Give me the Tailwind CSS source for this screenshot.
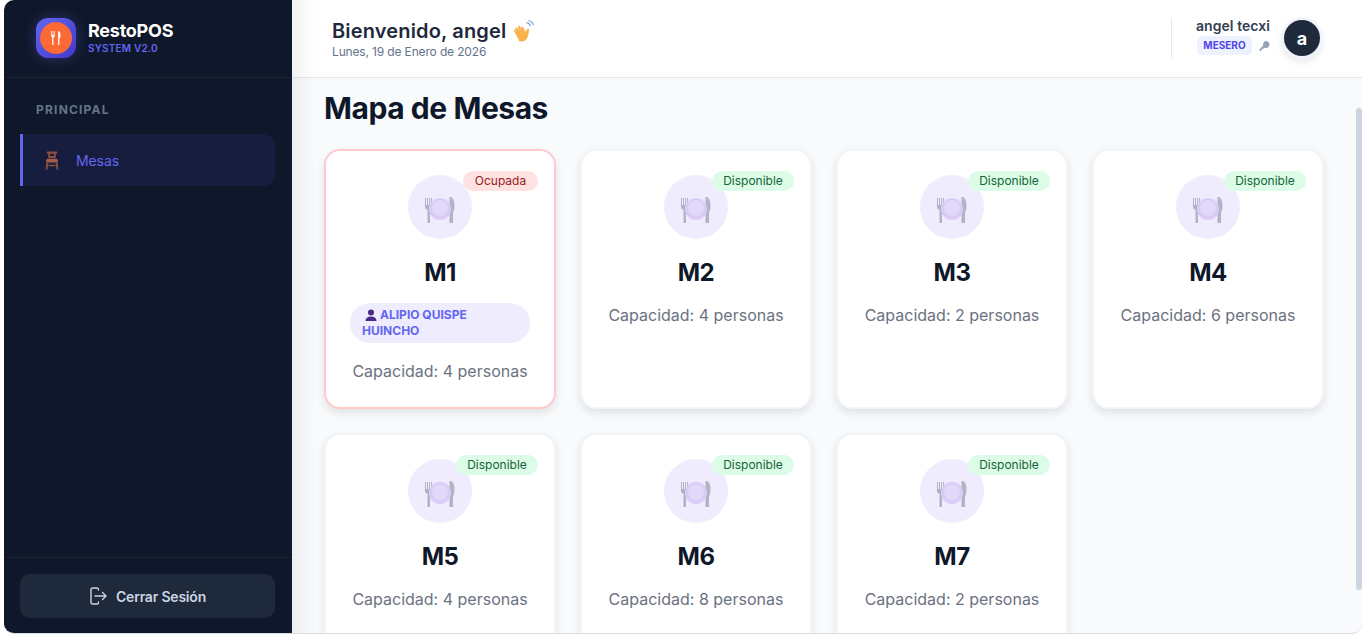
<!DOCTYPE html>
<html lang="es">
<head>
  <meta charset="UTF-8">
  <title>RestoPOS - Mapa de Mesas</title>
  <meta name="viewport" content="width=device-width, initial-scale=1">
  <script src="https://cdn.jsdelivr.net/npm/@tailwindcss/browser@4"></script>
</head>
<body class="bg-white h-[636px] overflow-hidden font-['Inter',sans-serif]">
  <div class="ml-[4px] w-[1358px] h-[634px] flex overflow-hidden rounded-[10px] border-b border-[#d9dce1] bg-[#f8fafc]">

    <!-- sidebar -->
    <aside class="w-[288px] shrink-0 bg-[#0f172a] flex flex-col z-10">
      <div class="h-[78px] border-b border-white/5 flex items-center pl-[32px] pb-[1px] gap-[12px]">
        <div class="w-[40px] h-[40px] rounded-[12px] bg-gradient-to-br from-[#6366f1] to-[#4338ca] shadow-[0_0_14px_rgba(99,102,241,0.35)] flex items-center justify-center">
          <div class="w-[32px] h-[32px] rounded-full bg-[#fb6a35] flex items-center justify-center">
            <svg width="16" height="16" viewBox="0 0 16 16" fill="#fff">
              <path d="M3.200 1h.7v4h.7V1h.7v4h.7V1h.7v5c0 .9-.6 1.400-1.200 1.600L5.400 15H4.200l-.1-7.400C3.500 7.400 3.200 6.900 3.200 6z"/>
              <path d="M10.600 1c1.300.8 2 2.600 2 4.600 0 1.300-.4 2.200-1.200 2.600V15h-1.300V1z"/>
            </svg>
          </div>
        </div>
        <div class="flex flex-col mb-[3px]">
          <span class="text-white text-[18px] leading-[22px] font-bold tracking-[-0.25px]">RestoPOS</span>
          <span class="text-[#6366f1] text-[10px] leading-[12px] font-semibold tracking-[0.2px]">SYSTEM V2.0</span>
        </div>
      </div>

      <div class="flex-1 px-[16px] pt-[24px]">
        <div class="pl-[16px] text-[#64748b] text-[12px] leading-[16px] font-bold tracking-[1.2px]">PRINCIPAL</div>
        <a class="mt-[16px] h-[52px] w-[255px] flex items-center gap-[14px] pl-[19px] bg-[#161d3f] border-l-[3px] border-[#6366f1] rounded-r-[12px] text-[#6366f1] text-[14px] font-normal">
          <svg width="20" height="20" viewBox="0 0 20 20">
            <path fill="#8a4f3f" d="M5 1.500h10v2.200h-1.200V8H6.200V3.700H5zM8 3.700V6h4V3.700z"/>
            <path fill="#a35c48" d="M4.800 8.800h10.400l1 3.600H3.800z"/>
            <path fill="#8a4f3f" d="M4.300 12.800h2.100L5.500 19.500H3.700zM13.600 12.800h2.100l.6 6.700h-1.800zM6.500 14.800h7v1.500h-7z"/>
          </svg>
          <span class="tracking-[-0.1px]">Mesas</span>
        </a>
      </div>

      <div class="h-[76px] border-t border-white/5 px-[16px] pt-[16px]">
        <button class="w-[255px] h-[44px] rounded-[10px] bg-[#1e293b] text-[#cbd5e1] text-[14px] font-semibold tracking-[-0.2px] flex items-center justify-center gap-[9px]">
          <svg width="18" height="18" viewBox="0 0 18 18" fill="none" stroke="#cbd5e1" stroke-width="1.400" stroke-linecap="round" stroke-linejoin="round">
            <path d="M9.500 3V2.600A1.600 1.600 0 0 0 7.900 1H3.600A1.600 1.600 0 0 0 2 2.600v12.800A1.600 1.600 0 0 0 3.600 17h4.300a1.600 1.600 0 0 0 1.600-1.600V15"/>
            <path d="M6 9h11M13.500 5.500 17 9l-3.500 3.500"/>
          </svg>
          Cerrar Sesión
        </button>
      </div>
    </aside>

    <!-- main -->
    <main class="relative flex-1 flex flex-col min-w-0">
      <header class="h-[78px] shrink-0 bg-white border-b border-[#e2e8f0] flex items-center justify-between pl-[40px] pr-[42px]">
        <div>
          <div class="flex items-center gap-[7px] text-[#1e293b] text-[20px] leading-[26px] font-semibold tracking-[0.15px]">
            Bienvenido, angel
            <svg width="22" height="22" viewBox="0 0 22 22" class="shrink-0">
              <path fill="#f9b24a" d="M3.700 16 1 11c-.6-1.100 1-2 1.700-.9l1.300 2L2.600 8.800c-.5-1.200 1.200-2 1.900-.8l2 3.200-1.400-4c-.4-1.300 1.400-1.900 2-.7l1.900 4-.8-2.800c-.3-1.200 1.400-1.800 1.900-.6l2.400 5.100c.5-1.600.9-3.100 2.400-3.400.9-.1 1.300.5 1.200 1.200-.4 2.100-.6 4.600-1.300 6.700-1.200 3.900-5.300 5.800-8.800 4.300C5.800 19.200 4.600 17.800 3.700 16z"/>
              <path fill="none" stroke="#5b9be0" stroke-width="1.100" stroke-linecap="round" d="M13.800 2.800c1.600.1 2.900 1.200 3.300 2.800M15.800 .8c2.200.2 3.800 1.700 4.400 3.800"/>
            </svg>
          </div>
          <div class="text-[#64748b] text-[12px] leading-[16px] tracking-[-0.15px]">Lunes, 19 de Enero de 2026</div>
        </div>
        <div class="flex items-center h-[40px] -mt-[1px] border-l border-[#e2e8f0]">
          <div class="pl-[24px] pb-[4px] flex flex-col items-end">
            <span class="text-[#334155] text-[14px] leading-[18px] font-semibold tracking-[0.05px]">angel tecxi</span>
            <div class="mt-[1px] flex items-center gap-[7px]">
              <span class="h-[19px] w-[55px] flex items-center justify-center rounded-[5px] bg-[#eef2ff] text-[#4f46e5] text-[10px] font-bold">MESERO</span>
              <svg width="11" height="12" viewBox="0 0 12 12" fill="#94a3b8"><path d="M7.600.6a3.800 3.800 0 1 1-1.700 7.200L4.700 9H3.500v1.200H2.300v1.200H.6V9.500l4-4A3.800 3.800 0 0 1 7.600.6z"/></svg>
            </div>
          </div>
          <div class="ml-[14px] w-[36px] h-[36px] rounded-full bg-[#1e293b] ring-[3px] ring-[#f1f5f9] shadow-[0_4px_10px_rgba(15,23,42,0.15)] flex items-center justify-center text-white text-[18px] font-bold">a</div>
        </div>
      </header>

      <!-- sombra que cae del sidebar -->
      <div class="absolute left-0 top-0 bottom-0 w-[24px] bg-gradient-to-r from-black/5 to-transparent pointer-events-none"></div>

      <section class="flex-1 overflow-hidden pl-[32px] pt-[12px]">
        <h1 class="text-[#0f172a] text-[30px] leading-[36px] font-bold tracking-[-0.45px]">Mapa de Mesas</h1>
        <div id="mesas" class="mt-[23px] grid grid-cols-[repeat(4,232px)] gap-[24px]"></div>
      </section>

      <!-- barra de scroll -->
      <div class="absolute right-0 top-[108px] w-[6px] h-[482px] rounded-full bg-[#cbd5e1]"></div>
    </main>
  </div>

  <script>
    const mesas = [
      { nombre: "M1", capacidad: 4, cliente: "ALIPIO QUISPE HUINCHO" },
      { nombre: "M2", capacidad: 4 },
      { nombre: "M3", capacidad: 2 },
      { nombre: "M4", capacidad: 6 },
      { nombre: "M5", capacidad: 4 },
      { nombre: "M6", capacidad: 8 },
      { nombre: "M7", capacidad: 2 },
    ];

    const plato = `
      <svg width="32" height="32" viewBox="0 0 32 32" class="opacity-50">
        <g fill="#7d7790" transform="translate(0 5)">
          <path d="M1 2h1v7h1V2h1v7h1V2h1v7h1V2h1v9c0 1.500-.8 2.300-2 2.700V27H3.500V13.700C1.800 13.300 1 12.500 1 11z"/>
          <path d="M25.500 27V1.500c0-.8 1-1 1.500-.6C29.800 2.500 30.500 6 30.500 10c0 3-1 5.500-1.500 6.500V27z"/>
        </g>
        <circle cx="16" cy="18" r="11" fill="#c3adf0"/>
        <circle cx="16" cy="17" r="8" fill="#d6c5f8"/>
      </svg>`;

    const contenedor = document.getElementById("mesas");
    mesas.forEach(m => {
      const ocupada = !!m.cliente;
      const card = document.createElement("div");
      card.className = ocupada
        ? "relative h-[260px] rounded-[16px] bg-white border-2 border-[#fecaca] shadow-[0_4px_8px_rgba(0,0,0,0.1)] flex flex-col items-center pt-[24px]"
        : "relative h-[260px] rounded-[16px] bg-white border-2 border-[#f1f5f9] shadow-[0_4px_8px_rgba(0,0,0,0.1)] flex flex-col items-center pt-[24px]";
      const badge = ocupada
        ? `<span class="absolute top-[20px] right-[16px] h-[20px] w-[75px] flex items-center justify-center rounded-full bg-[#fee2e2] text-[#991b1b] text-[12px]">Ocupada</span>`
        : `<span class="absolute top-[20px] right-[16px] h-[20px] w-[82px] flex items-center justify-center rounded-full bg-[#dcfce7] text-[#166534] text-[12px]">Disponible</span>`;
      const cliente = ocupada
        ? `<div class="mt-[14px] w-[180px] rounded-[20px] bg-[#efedfd] px-[12px] py-[4px] text-[#6366f1] text-[12px] leading-[16px] font-bold">
             <svg width="12" height="12" viewBox="0 0 12 12" fill="#4c2a85" class="inline ml-[3px] mr-[3px] mb-[2px]"><circle cx="6" cy="3.500" r="3"/><path d="M0.500 12c0-3 2-4.500 5.500-4.500s5.500 1.500 5.500 4.500z"/></svg>${m.cliente}
           </div>`
        : "";
      card.innerHTML = `
        ${badge}
        <div class="w-[64px] h-[64px] rounded-full bg-[#efedfd] flex items-center justify-center">${plato}</div>
        <div class="mt-[18px] text-[#0f172a] text-[24px] leading-[32px] font-bold tracking-[-0.5px]">${m.nombre}</div>
        ${cliente}
        <div class="${ocupada ? "mt-[16px]" : "mt-[14px]"} text-[#6b7280] text-[16px] leading-[24px]">Capacidad: ${m.capacidad} personas</div>
      `;
      contenedor.appendChild(card);
    });
  </script>
</body>
</html>
